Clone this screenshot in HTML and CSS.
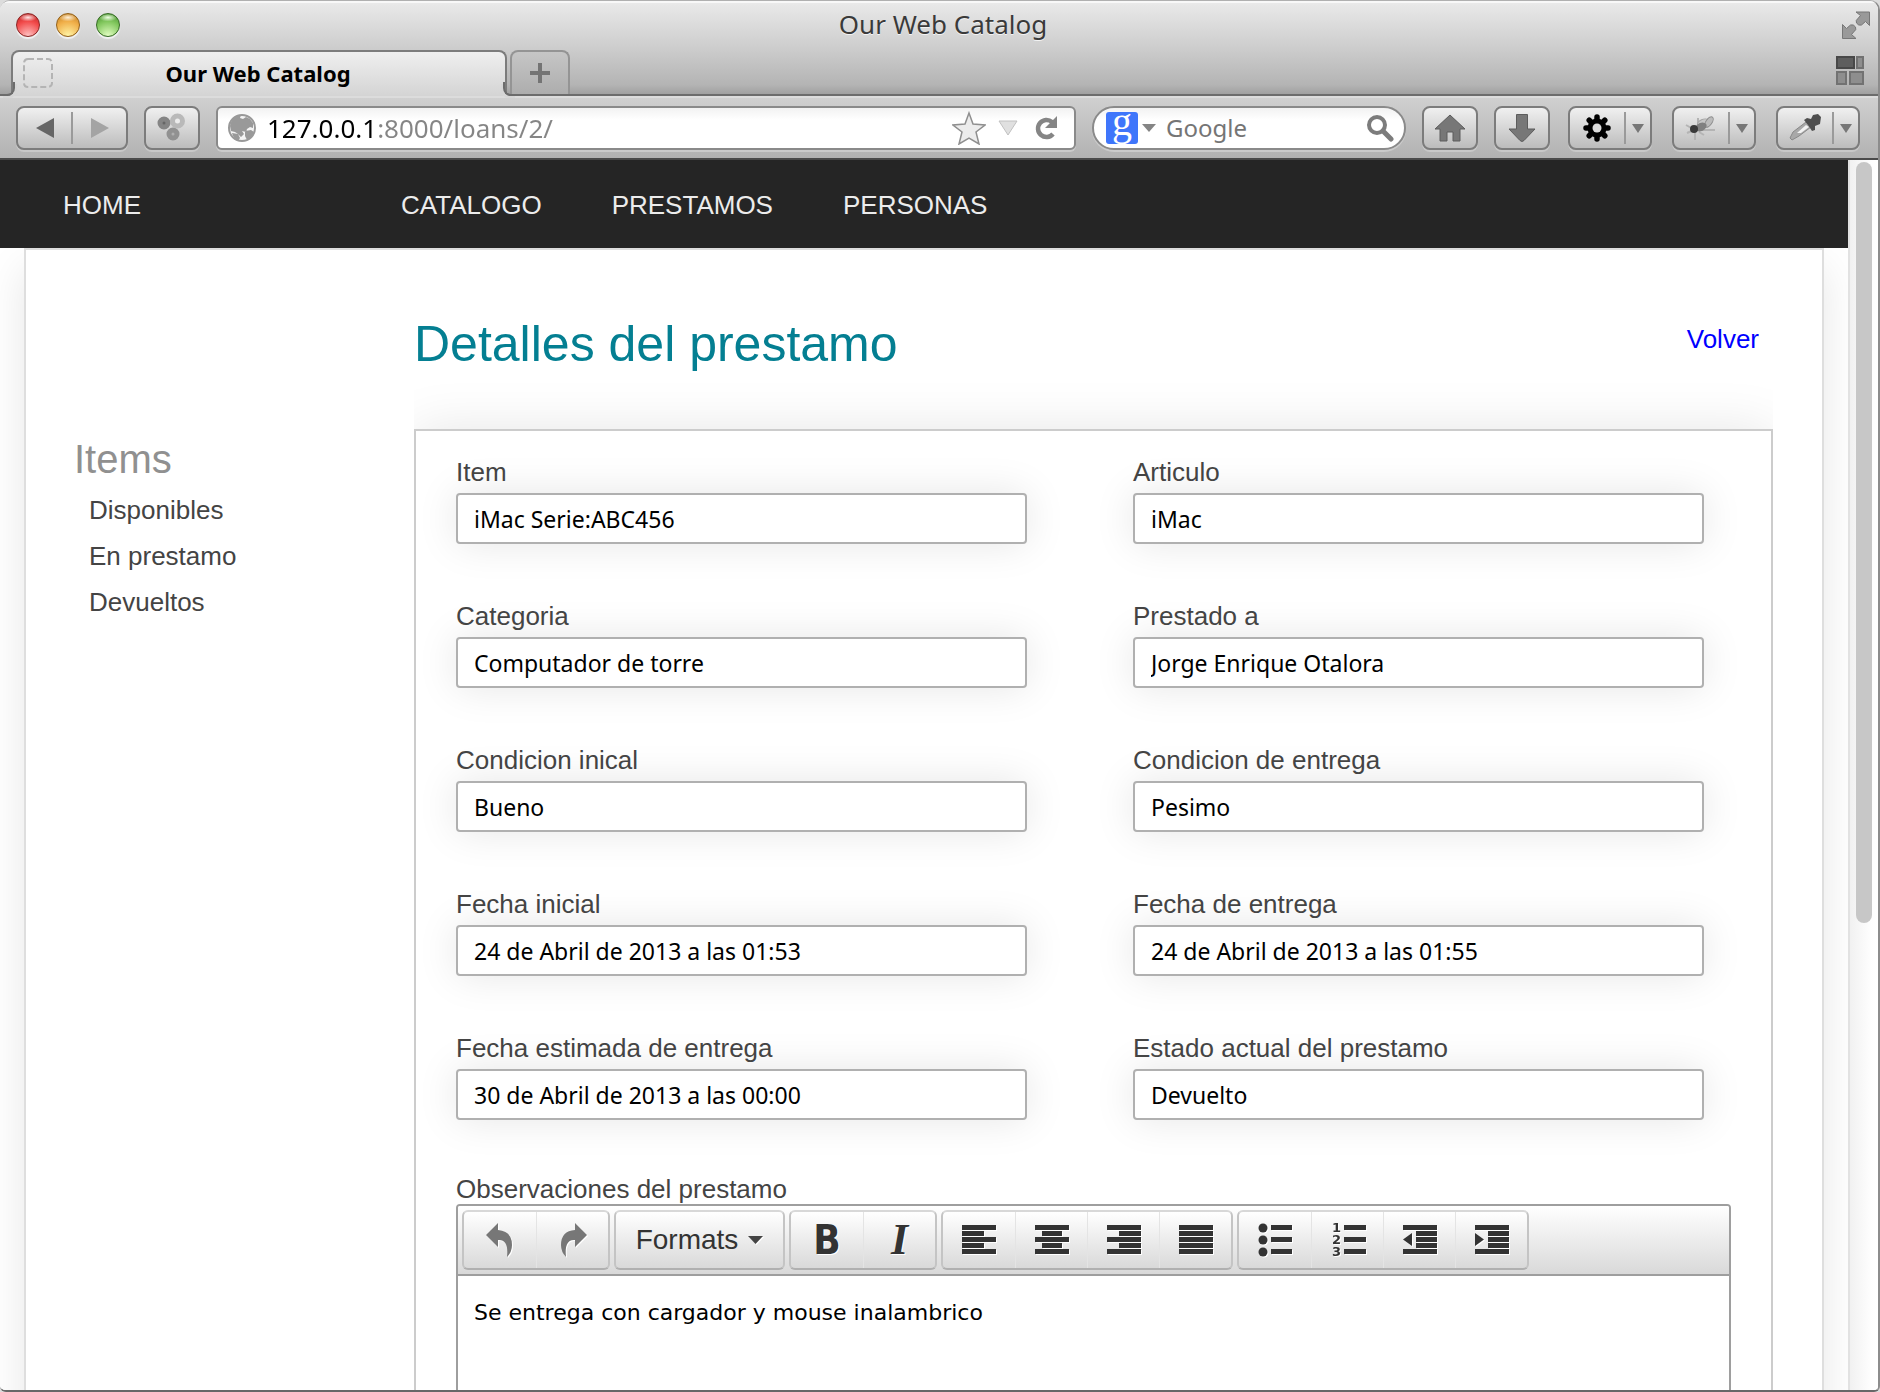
FILE: index.html
```html
<!DOCTYPE html>
<html lang="es">
<head>
<meta charset="utf-8">
<title>Our Web Catalog</title>
<link rel="stylesheet" href="styles.css">
</head>
<body>
<div class="window">
  <header class="chrome">
    <div class="titlebar">
      <div class="lights">
        <button class="light light-red" aria-label="Cerrar"></button>
        <button class="light light-yellow" aria-label="Minimizar"></button>
        <button class="light light-green" aria-label="Maximizar"></button>
      </div>
      <div class="window-title">Our Web Catalog</div>
      <button class="plain fullscreen" aria-label="Pantalla completa">
        <svg width="28" height="28" viewBox="0 0 28 28" fill="#999" stroke="#777" stroke-width="1"><path d="M14 1h13.500v13.500l-4-4-4 3.500q-3 1-5-2-1-3 1-4l3-3.500z"/><path d="M.5 13.500l4 4 4-3.500q3-1 5 2 1 3-1 4l-3 3.500 4.500 4H.5z"/></svg>
      </button>
    </div>
    <div class="tabs">
      <div class="tab">
        <svg class="tab-icon" width="30" height="30" viewBox="0 0 30 30" fill="none" stroke="#b4b4b4" stroke-width="2" stroke-dasharray="6 3"><rect x="1" y="1" width="28" height="28" rx="4"/></svg>
        <span class="tab-title">Our Web Catalog</span>
      </div>
      <button class="new-tab" aria-label="Nueva pestaña">
        <svg width="22" height="22" viewBox="0 0 22 22" fill="#747474"><path d="M9 1h4v8h8v4h-8v8H9v-8H1V9h8z"/></svg>
      </button>
      <button class="plain tab-groups" aria-label="Grupos de pestañas">
        <svg width="28" height="30" viewBox="0 0 28 30" fill="#8e8e8e" stroke="#727272" stroke-width="2"><rect x="1" y="1" width="17" height="11" fill="#5e5e5e" stroke="#484848"/><rect x="21" y="1" width="6" height="11"/><rect x="1" y="16" width="9" height="12"/><rect x="14" y="16" width="13" height="12"/></svg>
      </button>
    </div>
    <div class="toolbar">
      <div class="tool tool-pair">
        <button class="half" aria-label="Atrás"><svg width="18" height="20" viewBox="0 0 18 20"><path d="M0 10L18 0v20z" fill="#666"/></svg></button>
        <button class="half half-next" aria-label="Adelante"><svg width="18" height="20" viewBox="0 0 18 20"><path d="M18 10L0 0v20z" fill="#a4a4a4"/></svg></button>
      </div>
      <button class="tool tool-single" aria-label="Complemento">
        <svg width="30" height="30" viewBox="0 0 30 30" fill="none" stroke-width="5"><circle cx="7" cy="10" r="4" fill="#666" stroke="#858585"/><circle cx="16" cy="21" r="4" fill="#b0b0b0" stroke="#919191"/><circle cx="20.500" cy="8" r="5" fill="#ececec" stroke="#b9b9b9"/></svg>
      </button>
      <div class="field url-field">
        <svg width="30" height="30" viewBox="0 0 30 30"><circle cx="15" cy="15" r="13" fill="#f4f4f4" stroke="#999" stroke-width="2"/><path d="M3 13q1-7 7-10l4-1-1 3 3 1 3-2 4 2 3 4v5l-3-1-3 2-1 3-4-1 2 3-3 3-3-3-3-2-4-1zM18 18l6-1 3 2q-2 6-7 8l-2-4zM5 20l6 1 2 4-2 3q-5-3-6-8z" fill="#999"/></svg>
        <input class="url-input" type="text" aria-label="Dirección" value="127.0.0.1:8000/loans/2/">
        <svg class="star" width="34" height="34" viewBox="0 0 34 34"><path d="M17 2l4 11 12 1-9 7 3 12-10-6-10 6 3-12-9-7 12-1z" fill="#ececec" stroke="#8f8f8f" stroke-width="1.500"/></svg>
        <svg class="drop" width="20" height="16" viewBox="0 0 20 16"><path d="M1 1h18l-9 14z" fill="#e0e0e0" stroke="#c0c0c0"/></svg>
        <svg width="24" height="26" viewBox="0 0 24 26"><path d="M18 7A8.500 8.500 0 1 0 19 19" fill="none" stroke="#858585" stroke-width="4.500"/><path d="M23 1v12H11z" fill="#858585"/></svg>
      </div>
      <div class="field search-field">
        <span class="google-g" aria-hidden="true">g</span>
        <svg class="search-drop" width="14" height="8" viewBox="0 0 14 8"><path d="M0 0h14L7 8z" fill="#858585"/></svg>
        <input class="search-input" type="text" aria-label="Buscar" placeholder="Google">
        <svg width="28" height="28" viewBox="0 0 28 28" fill="none" stroke="#7c7c7c"><circle cx="11" cy="11" r="8" stroke-width="4"/><path d="M17 17l8 8" stroke-width="5" stroke-linecap="round"/></svg>
      </div>
      <button class="tool tool-single" aria-label="Inicio">
        <svg width="32" height="28" viewBox="0 0 32 28"><path d="M16 1l15 14h-5v12h-7v-9h-6v9H6V15H1z" fill="#777" stroke="#5c5c5c"/></svg>
      </button>
      <button class="tool tool-single" aria-label="Descargas">
        <svg width="28" height="28" viewBox="0 0 28 28"><path d="M8.500.5h11V15H27L16 26.500q-2 2-4 0L1 15h7.500z" fill="#777" stroke="#5c5c5c"/></svg>
      </button>
      <div class="addons">
        <div class="tool tool-split">
          <button class="split-main" aria-label="Ajustes"><svg width="28" height="28" viewBox="0 0 28 28"><g stroke="#000" stroke-width="5.500" stroke-linecap="round"><path d="M14 3v22M3 14h22M6.200 6.200l15.600 15.600M21.800 6.200L6.200 21.800"/></g><circle cx="14" cy="14" r="9.500"/><circle cx="14" cy="14" r="4.500" fill="#dcdcdc"/></svg></button>
          <button class="split-more" aria-label="Más ajustes"><svg width="12" height="9" viewBox="0 0 12 9"><path d="M0 0h12L6 9z" fill="#777"/></svg></button>
        </div>
        <div class="tool tool-split">
          <button class="split-main" aria-label="Depurar"><svg width="32" height="28" viewBox="0 0 32 28"><g fill="none" stroke="#b4b4b4" stroke-width="2"><path d="M1 11l7 4M2 19l7-3M10 18v8M14 18l5 3M16 16l14 0M13 11l0-7"/></g><ellipse cx="18" cy="9" rx="6" ry="3.500" transform="rotate(-25 18 9)" fill="#c6c6c6" stroke="#a4a4a4"/><ellipse cx="24" cy="8" rx="6" ry="3" transform="rotate(-55 24 8)" fill="#bbb" stroke="#8c8c8c"/><ellipse cx="16" cy="13" rx="6" ry="4" transform="rotate(-25 16 13)" fill="#808080"/><circle cx="9" cy="15" r="4" fill="#3a3a3a"/></svg></button>
          <button class="split-more" aria-label="Más opciones de depuración"><svg width="12" height="9" viewBox="0 0 12 9"><path d="M0 0h12L6 9z" fill="#777"/></svg></button>
        </div>
        <div class="tool tool-split">
          <button class="split-main" aria-label="Cuentagotas"><svg width="32" height="28" viewBox="0 0 32 28"><path d="M1 24l3-6L17 8l5 5-12 9-7 4z" fill="#a8a8a8" stroke="#888"/><path d="M8 19l9-8 3 2-8 6z" fill="#f2f2f2"/><path d="M15 6l3-2 4 1 2-4 5-1 3 3-1 7-5 2 0 4-3 1-4-6z" fill="#4e4e4e"/></svg></button>
          <button class="split-more" aria-label="Más opciones de color"><svg width="12" height="9" viewBox="0 0 12 9"><path d="M0 0h12L6 9z" fill="#777"/></svg></button>
        </div>
      </div>
    </div>
  </header>

  <div class="viewport">
    <div class="site">
      <nav class="site-nav">
        <a class="nav-home" href="#">HOME</a>
        <a class="nav-link" href="#">CATALOGO</a>
        <a class="nav-link" href="#">PRESTAMOS</a>
        <a class="nav-link" href="#">PERSONAS</a>
      </nav>
      <div class="sheet">
        <aside class="sidebar">
          <h2 class="side-title">Items</h2>
          <a class="side-link" href="#">Disponibles</a>
          <a class="side-link" href="#">En prestamo</a>
          <a class="side-link" href="#">Devueltos</a>
        </aside>
        <main class="main">
          <div class="heading">
            <h1 class="page-title">Detalles del prestamo</h1>
            <a class="back-link" href="#">Volver</a>
          </div>
          <form class="loan">
            <div class="fields">
              <div class="item"><label class="label" for="f1">Item</label><input class="text" id="f1" type="text" value="iMac Serie:ABC456"></div>
              <div class="item"><label class="label" for="f2">Articulo</label><input class="text" id="f2" type="text" value="iMac"></div>
              <div class="item"><label class="label" for="f3">Categoria</label><input class="text" id="f3" type="text" value="Computador de torre"></div>
              <div class="item"><label class="label" for="f4">Prestado a</label><input class="text" id="f4" type="text" value="Jorge Enrique Otalora"></div>
              <div class="item"><label class="label" for="f5">Condicion inical</label><input class="text" id="f5" type="text" value="Bueno"></div>
              <div class="item"><label class="label" for="f6">Condicion de entrega</label><input class="text" id="f6" type="text" value="Pesimo"></div>
              <div class="item"><label class="label" for="f7">Fecha inicial</label><input class="text" id="f7" type="text" value="24 de Abril de 2013 a las 01:53"></div>
              <div class="item"><label class="label" for="f8">Fecha de entrega</label><input class="text" id="f8" type="text" value="24 de Abril de 2013 a las 01:55"></div>
              <div class="item"><label class="label" for="f9">Fecha estimada de entrega</label><input class="text" id="f9" type="text" value="30 de Abril de 2013 a las 00:00"></div>
              <div class="item"><label class="label" for="f10">Estado actual del prestamo</label><input class="text" id="f10" type="text" value="Devuelto"></div>
            </div>
            <label class="label" for="notes">Observaciones del prestamo</label>
            <div class="editor">
              <div class="editor-bar">
                <div class="group">
                  <button type="button" class="ebtn" aria-label="Deshacer"><svg width="32" height="36" viewBox="0 0 32 36"><path d="M2 13L14 1v7q14 1 14 15 0 7-5 12 2-18-9-17v7z" fill="#777"/></svg></button>
                  <button type="button" class="ebtn" aria-label="Rehacer"><svg width="32" height="36" viewBox="0 0 32 36"><path d="M30 13L18 1v7Q4 9 4 23q0 7 5 12Q7 17 18 18v7z" fill="#777"/></svg></button>
                </div>
                <div class="group">
                  <button type="button" class="ebtn formats">Formats <svg width="15" height="8" viewBox="0 0 15 8"><path d="M0 0h15L7.500 8z" fill="#444"/></svg></button>
                </div>
                <div class="group">
                  <button type="button" class="ebtn bold">B</button>
                  <button type="button" class="ebtn italic">I</button>
                </div>
                <div class="group">
                  <button type="button" class="ebtn" aria-label="Alinear a la izquierda"><svg width="34" height="30" viewBox="0 0 34 30" fill="#333"><path d="M0 0h34v5H0zM0 6h22v5H0zM0 12h34v5H0zM0 18h22v5H0zM0 24h34v5H0z"/></svg></button>
                  <button type="button" class="ebtn" aria-label="Centrar"><svg width="34" height="30" viewBox="0 0 34 30" fill="#333"><path d="M0 0h34v5H0zM7 6h20v5H7zM0 12h34v5H0zM7 18h20v5H7zM0 24h34v5H0z"/></svg></button>
                  <button type="button" class="ebtn" aria-label="Alinear a la derecha"><svg width="34" height="30" viewBox="0 0 34 30" fill="#333"><path d="M0 0h34v5H0zM12 6h22v5H12zM0 12h34v5H0zM12 18h22v5H12zM0 24h34v5H0z"/></svg></button>
                  <button type="button" class="ebtn" aria-label="Justificar"><svg width="34" height="30" viewBox="0 0 34 30" fill="#333"><path d="M0 0h34v5H0zM0 6h34v5H0zM0 12h34v5H0zM0 18h34v5H0zM0 24h34v5H0z"/></svg></button>
                </div>
                <div class="group">
                  <button type="button" class="ebtn" aria-label="Lista"><svg width="34" height="34" viewBox="0 0 34 34" fill="#333"><circle cx="5" cy="5" r="4.500"/><circle cx="5" cy="17" r="4.500"/><circle cx="5" cy="29" r="4.500"/><path d="M13 2h21v5H13zM13 14h21v5H13zM13 26h21v5H13z"/></svg></button>
                  <button type="button" class="ebtn" aria-label="Lista numerada"><svg width="36" height="46" viewBox="-2 -6 36 46" fill="#333"><g class="digits"><text x="0" y="9">1</text><text x="0" y="21">2</text><text x="0" y="33">3</text></g><path d="M12 2h22v5H12zM12 14h22v5H12zM12 26h22v5H12z"/></svg></button>
                  <button type="button" class="ebtn" aria-label="Reducir sangría"><svg width="34" height="30" viewBox="0 0 34 30" fill="#333"><path d="M0 0h34v5H0zM13 6h21v5H13zM13 12h21v5H13zM13 18h21v5H13zM0 24h34v5H0zM9 8v13L0 14.500z"/></svg></button>
                  <button type="button" class="ebtn" aria-label="Aumentar sangría"><svg width="34" height="30" viewBox="0 0 34 30" fill="#333"><path d="M0 0h34v5H0zM13 6h21v5H13zM13 12h21v5H13zM13 18h21v5H13zM0 24h34v5H0zM0 8v13l9-6.500z"/></svg></button>
                </div>
              </div>
              <textarea class="notes" id="notes" rows="8">Se entrega con cargador y mouse inalambrico</textarea>
            </div>
          </form>
        </main>
      </div>
    </div>
    <div class="scrollbar"><div class="thumb"></div></div>
  </div>
</div>
</body>
</html>
```
FILE: styles.css
```css
* { box-sizing: border-box; }

body {
  margin: 0;
  background: #dcdcdc;
  color: #444;
  font-family: "Liberation Sans", Arial, sans-serif;
  font-size: 26px;
  line-height: 30px;
}

button, input, textarea { font: inherit; margin: 0; }
button { padding: 0; border: 0; background: none; color: inherit; }
svg { display: block; flex: none; }
a { text-decoration: none; }

.window {
  display: flex;
  flex-direction: column;
  height: 100vh;
  overflow: hidden;
  border-top: 1px solid #b0b0b0;
  border-right: 2px solid #8c8c8c;
  border-bottom: 2px solid #686868;
  border-radius: 10px 10px 6px 6px;
  background: #fff;
}

/* Browser chrome */
.chrome { flex: none; font-family: "Noto Sans", sans-serif; }

.titlebar {
  display: grid;
  grid-template-columns: 1fr auto 1fr;
  align-items: center;
  height: 47px;
  padding: 0 8px 0 16px;
  border-top: 2px solid #f8f8f8;
  background: linear-gradient(#e9e9e9, #cdcdcd);
}
.lights { display: flex; gap: 16px; padding-bottom: 2px; }
.light {
  width: 24px;
  height: 24px;
  border: 1px solid;
  border-radius: 50%;
  box-shadow: 0 2px 1px #f2f2f2;
}
.light-red { border-color: #8a2524; background: radial-gradient(ellipse 9px 4px at 50% 16%, #ffe4e4, transparent), radial-gradient(circle at 50% 100%, #ffc4c4, #f14a4a 60%, #b52020); }
.light-yellow { border-color: #936018; background: radial-gradient(ellipse 9px 4px at 50% 16%, #fff0d8, transparent), radial-gradient(circle at 50% 100%, #fff6a8, #f0ae48 60%, #b97a22); }
.light-green { border-color: #356b23; background: radial-gradient(ellipse 9px 4px at 50% 16%, #efffe4, transparent), radial-gradient(circle at 50% 100%, #e4ffc4, #80c65c 60%, #418a2c); }
.window-title { padding-bottom: 4px; color: #3a3a3a; text-shadow: 0 1px 0 #f4f4f4; }
.fullscreen { justify-self: end; padding-bottom: 2px; }

.tabs {
  display: flex;
  align-items: flex-end;
  height: 48px;
  padding: 0 14px 0 11px;
  border-bottom: 2px solid #6c6c6c;
  background: linear-gradient(#cdcdcd, #b4b4b4 80%, #a0a0a0);
}
.tab {
  position: relative;
  display: flex;
  align-items: center;
  flex: 0 1 496px;
  height: 46px;
  margin-bottom: -2px;
  padding: 0 12px 2px 10px;
  border: 2px solid #7c7c7c;
  border-bottom: 0;
  border-radius: 8px 8px 0 0;
  background: linear-gradient(#efefef, #d4d4d4);
}
.tab::before, .tab::after {
  content: "";
  position: absolute;
  bottom: 0;
  width: 12px;
  height: 12px;
  border-bottom: 2px solid #6c6c6c;
}
.tab::before { left: -12px; border-right: 2px solid #6c6c6c; border-bottom-right-radius: 8px; box-shadow: 2px 2px 0 #d6d6d6; }
.tab::after { right: -12px; border-left: 2px solid #6c6c6c; border-bottom-left-radius: 8px; box-shadow: -2px 2px 0 #d6d6d6; }
.tab-title { flex: 1; padding-right: 36px; text-align: center; color: #000; font-size: 22px; font-weight: 700; }
.tab-icon { margin-right: 6px; }
.new-tab {
  display: flex;
  align-items: center;
  justify-content: center;
  width: 60px;
  height: 44px;
  margin-left: 3px;
  border: 2px solid #949494;
  border-bottom: 0;
  border-radius: 8px 8px 0 0;
  background: linear-gradient(#c6c6c6, #adadad);
}
.tab-groups { margin: 0 0 8px auto; }

.toolbar {
  display: flex;
  align-items: center;
  gap: 16px;
  height: 64px;
  padding: 0 18px 0 16px;
  border-top: 2px solid #dcdcdc;
  border-bottom: 2px solid #4a4a4a;
  background: linear-gradient(#d0d0d0, #b2b2b2);
}
.tool {
  display: flex;
  align-items: center;
  justify-content: center;
  flex: none;
  height: 44px;
  border: 2px solid #7c7c7c;
  border-radius: 8px;
  background: linear-gradient(#f0f0f0, #bcbcbc);
  box-shadow: 0 2px 0 #c8c8c8;
}
.tool-pair { width: 112px; }
.tool-single { width: 56px; }
.tool-split { width: 84px; }
.half { display: flex; flex: 1; justify-content: center; align-items: center; height: 32px; }
.half-next { border-left: 2px solid #9a9a9a; }
.addons { display: flex; gap: 20px; margin-left: 2px; }
.split-main { display: flex; flex: 1; justify-content: center; align-items: center; height: 32px; }
.split-more { display: flex; justify-content: center; align-items: center; width: 26px; height: 32px; border-left: 2px solid #9a9a9a; }

.field {
  display: flex;
  align-items: center;
  height: 44px;
  min-width: 0;
  border: 2px solid #8a8a8a;
  background: linear-gradient(#f2f2f2, #fff 30%);
  box-shadow: 0 2px 0 #cbcbcb;
}
.url-field { flex: 1; padding: 0 16px 0 9px; border-radius: 6px; }
.url-input {
  flex: 1;
  min-width: 0;
  height: 36px;
  margin-left: 10px;
  padding: 0;
  border: 0;
  background: linear-gradient(90deg, #000 110px, #858585 110px);
  background-clip: text;
  -webkit-background-clip: text;
  color: transparent;
  font-size: 26px;
}
.star { margin-right: 12px; }
.drop { margin-right: 16px; }
.search-field { flex: none; width: 314px; padding: 0 10px 0 12px; border-radius: 22px; }
.google-g {
  display: flex;
  justify-content: center;
  flex: none;
  width: 32px;
  height: 32px;
  border-radius: 3px;
  background: #3f76fb;
  color: #fff;
  font-family: "Liberation Serif", serif;
  font-size: 40px;
  line-height: 20px;
}
.search-drop { margin: 0 10px 0 4px; }
.search-input { flex: 1; min-width: 0; padding: 0; border: 0; background: none; font-size: 24px; }
.search-input::placeholder { color: #757575; opacity: 1; }

/* Page */
.viewport { display: flex; flex: 1; min-height: 0; overflow: hidden; }
.site { flex: 1; min-width: 0; overflow: hidden; background: #fff; }
.site-nav {
  display: flex;
  align-items: center;
  gap: 70px;
  position: relative;
  height: 88px;
  padding: 2px 62px 0 63px;
  background: #252525;
}
.site-nav a { color: #ececec; }
.nav-home { width: 268px; }

.sheet {
  display: grid;
  grid-template-columns: 340px minmax(0, 1fr);
  margin: 0 24px;
  padding: 65px 49px 40px 48px;
  border: 2px solid #dedede;
  background: #fff;
  box-shadow: 0 20px 40px rgba(0, 0, 0, .1);
}
.sidebar { display: flex; flex-direction: column; padding-top: 121px; }
.side-title { margin: 0 0 5px; color: #909090; font-size: 40px; font-weight: 400; line-height: 46px; }
.side-link { padding-left: 15px; color: #444; line-height: 46px; }

.main { overflow-x: clip; }
.heading { display: flex; justify-content: space-between; align-items: flex-start; margin-bottom: 56px; padding-right: 14px; }
.page-title { margin: 0; color: #047f92; font-size: 50px; font-weight: 400; line-height: 58px; }
.back-link { margin-top: 9px; color: #00f; }

.loan {
  padding: 26px 40px 40px;
  border: 2px solid #ccc;
  box-shadow: 0 0 50px rgba(0, 0, 0, .1);
}
.fields {
  display: grid;
  grid-template-columns: 1fr 1fr;
  gap: 57px 106px;
  margin-bottom: 54px;
  padding-right: 27px;
}
.item { display: flex; flex-direction: column; gap: 6px; }
.label { display: block; position: relative; z-index: 1; color: #444; }
.text {
  width: 100%;
  height: 51px;
  padding: 0 16px;
  border: 2px solid #b0b0b0;
  border-radius: 4px;
  background: #fff;
  box-shadow: 0 0 40px rgba(0, 0, 0, .1);
  color: #000;
  font-family: "Noto Sans", sans-serif;
  font-size: 23px;
}

.editor { border: 2px solid #9e9e9e; border-radius: 4px; overflow: hidden; }
.editor-bar {
  display: flex;
  flex-wrap: wrap;
  gap: 4px;
  padding: 4px;
  border-bottom: 2px solid #9e9e9e;
  background: linear-gradient(#fff, #d9d9d9);
}
.group {
  display: flex;
  height: 60px;
  border: 2px solid #c4c4c4;
  border-top-color: #d8d8d8;
  border-bottom-color: #b0b0b0;
  border-radius: 6px;
  background: linear-gradient(#fff, #d9d9d9);
}
.ebtn {
  display: flex;
  align-items: center;
  justify-content: center;
  width: 72px;
  color: #333;
}
.ebtn + .ebtn { border-left: 1px solid #e4e4e4; }
.ebtn svg { filter: drop-shadow(1px 1px 0 #fff); }
.formats { gap: 10px; width: 167px; font-size: 28px; }
.bold { font-family: "DejaVu Sans Condensed", "DejaVu Sans", sans-serif; font-size: 40px; font-weight: 700; text-shadow: 1px 1px 0 #fff; }
.italic { font-family: "Liberation Serif", serif; font-size: 44px; font-style: italic; font-weight: 700; text-shadow: 1px 1px 0 #fff; }
.digits { font-family: "DejaVu Sans", sans-serif; font-size: 13px; font-weight: 700; }
.notes {
  display: block;
  width: 100%;
  padding: 22px 16px;
  border: 0;
  resize: none;
  background: #fff;
  color: #000;
  font-family: "DejaVu Sans", sans-serif;
  font-size: 22px;
}

.scrollbar {
  flex: none;
  width: 30px;
  padding: 2px 6px 0 6px;
  border-left: 2px solid #e2e2e2;
  background: linear-gradient(90deg, #f1f1f1, #fdfdfd 70%, #fff);
}
.thumb { width: 16px; height: 62%; border-radius: 8px; background: #c7c7c7; }
```
